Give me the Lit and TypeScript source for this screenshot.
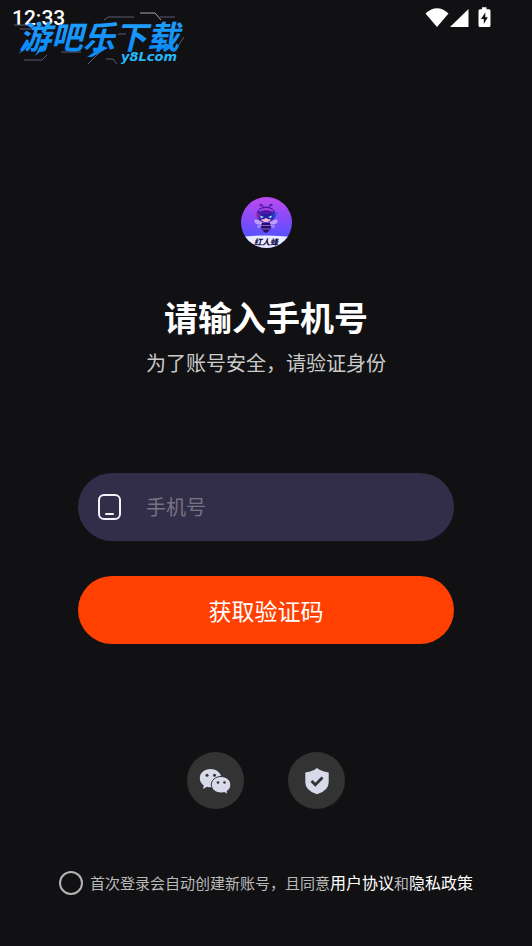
import { LitElement, html, css } from "lit";
import { customElement, state } from "lit/decorators.js";

@customElement("status-bar")
export class StatusBar extends LitElement {
  static styles = css`
    :host {
      display: flex;
      align-items: center;
      justify-content: space-between;
      height: 36px;
      padding: 0 39px 0 12px;
      color: #fff;
      font: 500 21px/36px Roboto, sans-serif;
    }
    .icons {
      display: block;
      width: 68px;
      height: 24px;
    }
  `;

  render() {
    return html`
      <span>12:33</span>
      <svg class="icons" viewBox="0 0 68 24" role="img" aria-label="Wi-Fi, signal, charging">
        <path fill="#fff" d="M.500 7.500Q12 -3 23.500 7.500L12 21Z" />
        <path fill="#fff" d="M43.500 3V21H25Z" />
        <path fill="#fff" d="M57 1.300h4.500v2h2.500q1.500 0 1.500 1.500v14.700q0 1.500-1.500 1.500h-9q-1.500 0-1.500-1.500V4.800q0-1.500 1.500-1.500h2Z" />
        <path fill="#111113" d="M60.300 6.500L56 13h2.800v5L62.800 11.300h-2.500Z" />
      </svg>
    `;
  }
}

@customElement("site-mark")
export class SiteMark extends LitElement {
  static styles = css`
    :host {
      display: block;
      width: 176px;
      height: 60px;
      pointer-events: none;
    }
    .name {
      font: italic 700 32px "Noto Sans CJK SC", sans-serif;
    }
    .domain {
      font: italic 700 13px "DejaVu Sans", sans-serif;
    }
  `;

  render() {
    return html`
      <svg width="176" height="60" viewBox="0 0 176 60">
        <defs>
          <linearGradient id="blue" x1="0" y1="0" x2="0" y2="1">
            <stop offset="0" stop-color="#25a5ff" />
            <stop offset="1" stop-color="#0787f5" />
          </linearGradient>
        </defs>
        <g fill="none" stroke="#5d5b78" stroke-width="1">
          <path d="M92 12l4-3h26M148 9h15M2 17h17M8 21h16" />
          <path d="M12 52h18l5-5M49 44h20M76 56l12-12M94 51h7l4 5M162 44l10-15M106 26h8" />
          <path d="M128 5h15l6 7" stroke="#a5a3b8" />
        </g>
        <text class="name" x="7" y="41" fill="url(#blue)">游吧乐下载</text>
        <path fill="#0c8df9" d="M13 35L7 46 16 38 19 35ZM36 37L23 48 28 38ZM91 38L75 49 80 49 96 40ZM158 37L146 43 153 35Z" />
        <text class="domain" x="109" y="53" fill="#26b9fa">y8Lcom</text>
      </svg>
    `;
  }
}

@customElement("bee-logo")
export class BeeLogo extends LitElement {
  static styles = css`
    :host {
      display: block;
      width: 52px;
      height: 52px;
    }
    .label {
      font: italic 900 8px "Noto Sans CJK SC", sans-serif;
    }
  `;

  render() {
    return html`
      <svg width="52" height="52" viewBox="0 0 52 52" role="img" aria-label="红人蜂">
        <defs>
          <linearGradient id="sky" x1="0" y1="0" x2="0" y2="1">
            <stop offset="0" stop-color="#c14af0" />
            <stop offset=".5" stop-color="#7e4bfa" />
            <stop offset=".8" stop-color="#5552ff" />
          </linearGradient>
          <linearGradient id="mask" x1="0" y1="0" x2="1" y2="0">
            <stop offset="0" stop-color="#e736d2" />
            <stop offset=".3" stop-color="#2c1ba3" />
            <stop offset=".7" stop-color="#2c1ba3" />
            <stop offset="1" stop-color="#276dff" />
          </linearGradient>
          <clipPath id="disc"><circle cx="26.500" cy="26.500" r="25.500" /></clipPath>
        </defs>
        <g clip-path="url(#disc)">
          <rect width="52" height="52" fill="url(#sky)" />
          <path d="M0 41Q26 38 52 41V52H0Z" fill="#e9ebff" />
          <path d="M23.500 12Q23 9 21 8.500M28.500 12Q29 9 31 8.500" fill="none" stroke="#5a1ba0" stroke-width="1.200" />
          <circle cx="20.800" cy="9" r="1.300" fill="#5a1ba0" />
          <circle cx="31.200" cy="9" r="1.300" fill="#5a1ba0" />
          <path d="M22 25Q12 21 15 27Q17 29 22 28ZM30 25Q40 21 37 27Q35 29 30 28Z" fill="#b9a1ff" />
          <path d="M22 28q-6 0-5 3t5-1ZM30 28q6 0 5 3t-5-1Z" fill="#9a83f8" />
          <ellipse cx="26" cy="18.500" rx="9.500" ry="8" fill="#4b1aa3" />
          <path d="M19 15Q26 11 33 15" fill="none" stroke="#a545e8" stroke-width="2" />
          <path d="M20 21h12q-1 5-6 5t-6-5Z" fill="#f0bcd0" />
          <path d="M14 16Q26 20 38 16L35 22Q31 25 26 22Q21 25 17 22Z" fill="url(#mask)" />
          <path d="M20 19.500l4 1.500-3 1.200ZM32 19.500l-4 1.500 3 1.200Z" fill="#86efff" />
          <path d="M22 27h8l1 4q-1 4-5 6q-4-2-5-6Z" fill="#27125d" />
          <path d="M21.500 29.500h9M22 33h8" stroke="#8d57e8" stroke-width="1" />
          <text class="label" x="14" y="49" fill="#1c174e">红人蜂</text>
        </g>
      </svg>
    `;
  }
}

@customElement("app-root")
export class AppRoot extends LitElement {
  @state() private phone = "";
  @state() private agreed = false;

  static styles = css`
    :host {
      position: relative;
      display: flex;
      flex-direction: column;
      min-height: 100vh;
      box-sizing: border-box;
      background: #111113;
      color: #fff;
      font-family: "Noto Sans CJK SC", sans-serif;
    }
    * {
      box-sizing: border-box;
    }
    .mark {
      position: absolute;
      top: 8px;
      left: 12px;
    }
    main {
      display: flex;
      flex: 1;
      flex-direction: column;
      align-items: center;
      padding: 160px 0 48px;
    }
    h1 {
      margin: 44px 0 0;
      font-size: 34px;
      font-weight: 700;
      line-height: 50px;
    }
    .hint {
      margin: 5px 0 0;
      color: #cbcbcb;
      font-size: 20px;
      line-height: 32px;
    }
    form {
      display: flex;
      flex-direction: column;
      gap: 35px;
      width: 100%;
      margin-top: 94px;
      padding: 0 78px;
    }
    .field {
      display: flex;
      align-items: center;
      gap: 24px;
      height: 68px;
      padding: 0 32px 0 18px;
      border-radius: 34px;
      background: #322e49;
    }
    .field svg {
      flex: none;
    }
    .field input {
      flex: 1;
      min-width: 0;
      padding: 0;
      border: 0;
      outline: 0;
      background: none;
      color: #fff;
      font: inherit;
      font-size: 20px;
      line-height: 32px;
    }
    .field input::placeholder {
      color: #767383;
      opacity: 1;
    }
    .submit {
      height: 68px;
      padding: 0;
      border: 0;
      border-radius: 34px;
      background: #ff4001;
      color: #fff;
      font: inherit;
      font-size: 23px;
    }
    .others {
      display: flex;
      gap: 44px;
      margin-top: 108px;
    }
    .other {
      display: grid;
      place-items: center;
      width: 57px;
      height: 57px;
      padding: 0;
      border: 0;
      border-radius: 50%;
      background: #333;
    }
    .terms {
      display: flex;
      align-items: center;
      gap: 7px;
      margin-top: 61px;
      color: #bababa;
      font-size: 15px;
      line-height: 24px;
      white-space: nowrap;
    }
    .terms input {
      appearance: none;
      flex: none;
      width: 24px;
      height: 24px;
      margin: 0;
      border: 2px solid #b4b4b4;
      border-radius: 50%;
    }
    .terms input:checked {
      background: #ff4001;
    }
    .terms a {
      color: #fff;
      font-size: 16px;
      text-decoration: none;
    }
  `;

  render() {
    return html`
      <status-bar></status-bar>
      <site-mark class="mark"></site-mark>
      <main>
        <bee-logo></bee-logo>
        <h1>请输入手机号</h1>
        <p class="hint">为了账号安全，请验证身份</p>
        <form @submit=${(e: Event) => e.preventDefault()}>
          <label class="field">
            <svg width="26" height="28" viewBox="0 0 26 28" fill="none" stroke="#f3f2f8" stroke-width="2" aria-hidden="true">
              <rect x="3" y="2" width="21" height="24" rx="5" />
              <path d="M10 21h7" stroke-linecap="round" />
            </svg>
            <input
              type="tel"
              aria-label="手机号"
              placeholder="手机号"
              .value=${this.phone}
              @input=${(e: Event) => (this.phone = (e.target as HTMLInputElement).value)}
            />
          </label>
          <button class="submit" type="submit">获取验证码</button>
        </form>
        <div class="others">
          <button class="other" type="button" aria-label="微信登录">
            <svg width="33" height="28" viewBox="0 0 33 28" aria-hidden="true">
              <path fill="#d8daea" d="M11.500 2C5.300 2 .8 6 .8 11.200c0 3 1.500 5.500 4 7.200L4 22l4-2.200c1.200.4 2.400.5 3.500.5 6.200 0 10.900-4 10.900-9.100S17.700 2 11.500 2Z" />
              <circle cx="8" cy="8.300" r="1.500" fill="#333" />
              <circle cx="15.500" cy="8.300" r="1.500" fill="#333" />
              <path fill="#d8daea" stroke="#333" d="M22 9.500c-5.400 0-9.700 3.600-9.700 8.300s4.300 8.200 9.700 8.200c1.200 0 2.300-.1 3.300-.5l3.600 2-.8-3.300c2.300-1.500 3.700-3.700 3.700-6.400 0-4.700-4.400-8.300-9.800-8.300Z" />
              <circle cx="19" cy="15.500" r="1.300" fill="#333" />
              <circle cx="25.500" cy="15.500" r="1.300" fill="#333" />
            </svg>
          </button>
          <button class="other" type="button" aria-label="安全验证登录">
            <svg width="24" height="28" viewBox="0 0 24 28" aria-hidden="true">
              <path fill="#d8daea" d="M12 1l2.500 1.700q4 2.300 9.200 2.700v10q0 8-11.700 11.900Q.3 23.400 .3 15.400V5.400Q5.500 5 9.500 2.700Z" />
              <path d="M6.500 14l3.800 3.800 7.200-7.200" fill="none" stroke="#333" stroke-width="2.800" />
            </svg>
          </button>
        </div>
        <div class="terms">
          <input
            id="agree"
            type="checkbox"
            .checked=${this.agreed}
            @change=${(e: Event) => (this.agreed = (e.target as HTMLInputElement).checked)}
          />
          <span><label for="agree">首次登录会自动创建新账号，且同意</label><a href="#agreement">用户协议</a>和<a href="#privacy">隐私政策</a></span>
        </div>
      </main>
    `;
  }
}
